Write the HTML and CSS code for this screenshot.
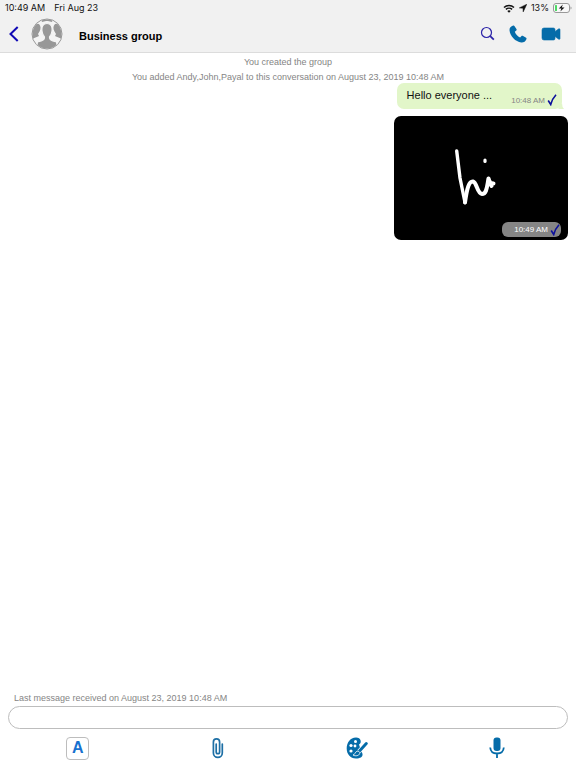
FILE: index.html
```html
<!DOCTYPE html>
<html lang="en">
<head>
<meta charset="utf-8">
<meta name="viewport" content="width=device-width, initial-scale=1">
<title>Business group</title>
<link rel="stylesheet" href="styles.css">
</head>
<body>
<header class="top">
  <div class="status">
    <span>10:49 AM</span>
    <span>Fri Aug 23</span>
    <div class="status-right">
      <svg width="12" height="9" viewBox="0 0 12 9" aria-hidden="true"><path d="M1 3.500a7.200 7.200 0 0 1 10 0M2.900 5.400a4.500 4.500 0 0 1 6.200 0" fill="none" stroke="#111" stroke-width="1.500"/><path d="M4.300 7a2.500 2.500 0 0 1 3.400 0L6 8.800z" fill="#111"/></svg>
      <svg width="8" height="8" viewBox="0 0 8 8" aria-hidden="true"><path d="M7.800.200L.300 3.900l3.700.3.200 3.700z" fill="#111" stroke="#111" stroke-width=".5"/></svg>
      <span>13%</span>
      <svg width="19" height="10" viewBox="0 0 19 10" aria-hidden="true"><rect x=".5" y=".5" width="16" height="9" rx="2.500" fill="#f8f8f8" stroke="#999"/><rect x="2" y="2" width="2" height="6" rx=".6" fill="#4bd964"/><path d="M17.500 3.500a1.600 1.600 0 0 1 0 3z" fill="#999"/><path d="M9.800 1.500L5.800 5.500h2.600L7.400 8.500 11.500 4.500H8.800z" fill="#111"/></svg>
    </div>
  </div>
  <div class="bar">
    <button class="icon-btn" aria-label="Back"><svg width="10" height="16" viewBox="0 0 10 16"><path d="M8.700 1L1.500 8l7.200 7" fill="none" stroke="#1009b4" stroke-width="2"/></svg></button>
    <svg class="avatar" width="32" height="32" viewBox="0 0 32 32" aria-hidden="true">
      <defs><clipPath id="disc"><circle cx="16" cy="16" r="14.500"/></clipPath></defs>
      <circle cx="16" cy="16" r="15" fill="#f4f4f4" stroke="#999"/>
      <g clip-path="url(#disc)" fill="#989898">
        <path d="M4 5.500l4 .5c2 2 2 5 .5 7.500L7 16l1 2c-2 1-5 1.500-7 3.500V10zM28 5.500l-4 .5c-2 2-2 5-.5 7.500L25 16l-1 2c2 1 5 1.500 7 3.500V10z"/>
        <path d="M10 1h12l-1 3-4-1h-2l-4 1z"/>
        <path d="M16 5.500c-4.200 0-5.500 3.300-5 7.500.3 2.600 1.200 4.500 2.500 5.900.2 3.100-1.500 3.600-7 5.100L5 32h22l-1.500-8c-5.500-1.500-7.200-2-7-5.100 1.300-1.400 2.200-3.300 2.500-5.900.5-4.200-.8-7.500-5-7.500z" stroke="#f4f4f4" stroke-width="1.200"/>
      </g>
    </svg>
    <h1>Business group</h1>
    <div class="actions">
      <button class="icon-btn" aria-label="Search"><svg width="16" height="16" viewBox="0 0 16 16"><circle cx="7.500" cy="6.500" r="5" fill="none" stroke="#2b22a8" stroke-width="1.200"/><path d="M11.200 10.200l3.600 3.500" stroke="#2b22a8" stroke-width="1.800"/></svg></button>
      <button class="icon-btn" aria-label="Voice call"><svg width="18" height="18" viewBox="0 0 18 18"><path d="M4.200.6C2 1.300.3 2.900.5 5.300c.5 5.900 6 11.600 11.800 12.200 2.300.2 4.300-1.200 5.200-3.600.2-.5 0-.9-.4-1.200l-3.400-1.900c-.4-.2-.9-.1-1.200.2l-1.400 1.600C8.500 11.200 6.600 9 5.800 6.700L7.300 5.400c.4-.3.400-.8.300-1.200L5.400 1C5.100.6 4.700.4 4.200.6z" fill="#056ca9"/></svg></button>
      <button class="icon-btn" aria-label="Video call"><svg width="20" height="14" viewBox="0 0 20 14"><path d="M3 1h9.500Q14 1 14 2.500v2L17.500 2c.8-.5 1.500-.1 1.500.6v9c0 .8-.8 1-1.500.5L14 9.500v2Q14 13 12.500 13H3Q1 13 1 11V3Q1 1 3 1z" fill="#056ca9" stroke="#056ca9" stroke-width=".6"/></svg></button>
    </div>
  </div>
</header>
<main class="chat">
  <p class="notice">You created the group</p>
  <p class="notice">You added Andy,John,Payal to this conversation on August 23, 2019 10:48 AM</p>
  <div class="bubble">
    <span class="message">Hello everyone ...</span>
    <time>10:48 AM</time>
    <svg width="10" height="12" viewBox="0 0 10 12" aria-hidden="true"><path d="M1.200 6.500L3.700 10.500C4.800 6.500 6.500 3.500 9 .8" fill="none" stroke="#0c109c" stroke-width="1.600"/></svg>
    <svg class="tail" width="6" height="6" viewBox="0 0 6 6" aria-hidden="true"><path d="M0 6h6Q4 4 4 0z" fill="#e2f6c9"/></svg>
  </div>
  <figure class="drawing">
    <svg class="sketch" viewBox="0 0 174 124" role="img" aria-label="Handwritten greeting"><g fill="none" stroke="#fff" stroke-linecap="round" stroke-linejoin="round"><path d="M62.700 35L66 62 71 86.500" stroke-width="3.400"/><path d="M71 86.500C73 72 75 65 79 65.500c4 1 4 12 9 12.500 5 0 5-8 6.500-15.500l1.500 4.500 3.500.5M95.500 65l2 5" stroke-width="4"/><path d="M91 44v1.500" stroke-width="3.200"/></g></svg>
    <figcaption><time>10:49 AM</time><svg width="10" height="12" viewBox="0 0 10 12" aria-hidden="true"><path d="M1.200 6.500L3.700 10.500C4.800 6.500 6.500 3.500 9 .8" fill="none" stroke="#0c109c" stroke-width="1.600"/></svg></figcaption>
  </figure>
</main>
<footer class="composer">
  <p class="last">Last message received on August 23, 2019 10:48 AM</p>
  <input class="entry" type="text" aria-label="Message">
  <div class="tools">
    <button class="icon-btn letter" aria-label="Text style">A</button>
    <button class="icon-btn" aria-label="Attach file"><svg width="12" height="22" viewBox="0 0 12 22"><path d="M4.200 7v8a1.700 1.700 0 0 0 3.400 0V5a3.100 3.100 0 0 0-6.200 0V16a4.400 4.400 0 0 0 8.900 0V7" fill="none" stroke="#1d6fa5" stroke-width="1.700" stroke-linecap="round"/></svg></button>
    <button class="icon-btn" aria-label="Draw"><svg width="22" height="22" viewBox="0 0 22 22"><path d="M10 .5C4 .5.700 6 .700 11.500.700 17 4.200 21.500 10 21.500c4 0 7-1.500 6.500-4.500-.3-1.500-1-2.500-1.500-3.500l-2-6c1.500-1 2-2 1.600-4C14.200 1.500 12.500.5 10 .5z" fill="#056ca9"/><g fill="#fff"><circle cx="9.500" cy="4.500" r="1.500"/><circle cx="5" cy="8.500" r="1.600"/><circle cx="9" cy="9" r="1.400"/><circle cx="5" cy="14" r="1.600"/></g><path d="M20.300 6.500L13 14.500" stroke="#fff" stroke-width="4.200"/><path d="M20.300 6.500L13.500 14" stroke="#056ca9" stroke-width="2.900" stroke-linecap="round"/><path d="M7 18c2-.2 2-3 4-3.800 1.500-.5 3 .8 2.700 2.200-.6 2.600-4.500 3-6.700 1.600z" fill="#056ca9" stroke="#fff" stroke-width=".8"/></svg></button>
    <button class="icon-btn" aria-label="Record voice"><svg width="16" height="22" viewBox="0 0 16 22"><rect x="4.500" y=".5" width="7" height="13.500" rx="3" fill="#056ca9"/><path d="M1.200 10.500c.3 4 3 6 6.800 6s6.500-2 6.800-6M8 16.500V21" fill="none" stroke="#056ca9" stroke-width="1.800"/></svg></button>
  </div>
</footer>
</body>
</html>
```
FILE: styles.css
```css
* { box-sizing: border-box; }
body {
  margin: 0;
  min-height: 100vh;
  display: flex;
  flex-direction: column;
  background: #fff;
  color: #111;
  font-family: "Liberation Sans", Arial, sans-serif;
}
p, h1, figure { margin: 0; }
svg { display: block; flex: none; }
.icon-btn {
  display: flex;
  align-items: center;
  justify-content: center;
  padding: 0;
  border: 0;
  background: none;
}
.top {
  background: #f1f1f1;
  border-bottom: 1px solid #dcdcdc;
}
.status {
  display: flex;
  align-items: center;
  gap: 9px;
  height: 16px;
  padding: 0 4px 0 5px;
  font: 9px/16px Inter, sans-serif;
}
.status-right {
  display: flex;
  align-items: center;
  gap: 4px;
  margin-left: auto;
}
.bar {
  display: flex;
  align-items: center;
  height: 36px;
  padding: 0 15px 0 9px;
}
.avatar { margin: 0 16px 0 12px; }
h1 {
  padding-top: 3px;
  font-size: 11px;
  line-height: 16px;
  color: #000;
}
.actions {
  display: flex;
  align-items: center;
  gap: 14px;
  margin-left: auto;
}
.chat {
  flex: 1;
  display: flex;
  flex-direction: column;
  padding: 2px 8px 0;
}
.notice, .last {
  color: #858585;
  font-size: 9px;
  line-height: 15px;
}
.notice { text-align: center; }
.bubble {
  position: relative;
  align-self: flex-end;
  display: flex;
  align-items: flex-end;
  height: 26px;
  margin: -2px 6px 7px 0;
  padding: 0 5px 3px 10px;
  border-radius: 7px;
  background: #e2f6c9;
}
.message {
  align-self: flex-start;
  margin-right: 19px;
  font-size: 11px;
  line-height: 24px;
}
time {
  margin-right: 2px;
  font-size: 8px;
  line-height: 10px;
  color: #858585;
}
.tail {
  position: absolute;
  right: -2px;
  bottom: 0;
}
.drawing {
  position: relative;
  align-self: flex-end;
  width: 174px;
  overflow: hidden;
  border-radius: 7px;
  background: #000;
}
.sketch { width: 100%; }
figcaption {
  position: absolute;
  right: 7px;
  bottom: 3px;
  display: flex;
  align-items: center;
  height: 15px;
  padding: 0 1px 0 12px;
  border-radius: 6px;
  background: #858585;
}
figcaption time { color: #fff; }
.composer { padding: 0 8px 8px; }
.last { padding-left: 6px; }
.entry {
  display: block;
  width: 100%;
  height: 23px;
  padding: 0 12px;
  border: 1px solid #bdbdbd;
  border-radius: 12px;
  background: #fff;
  font: 11px "Liberation Sans", Arial, sans-serif;
}
.tools {
  display: grid;
  grid-template-columns: repeat(4, 1fr);
  justify-items: center;
  align-items: center;
  height: 24px;
  margin-top: 7px;
  padding-right: 1px;
}
.letter {
  width: 23px;
  height: 23px;
  border: 1px solid #bdbdbd;
  border-radius: 4px;
  color: #1771cf;
  font: bold 16px "Liberation Sans", Arial, sans-serif;
}
```
